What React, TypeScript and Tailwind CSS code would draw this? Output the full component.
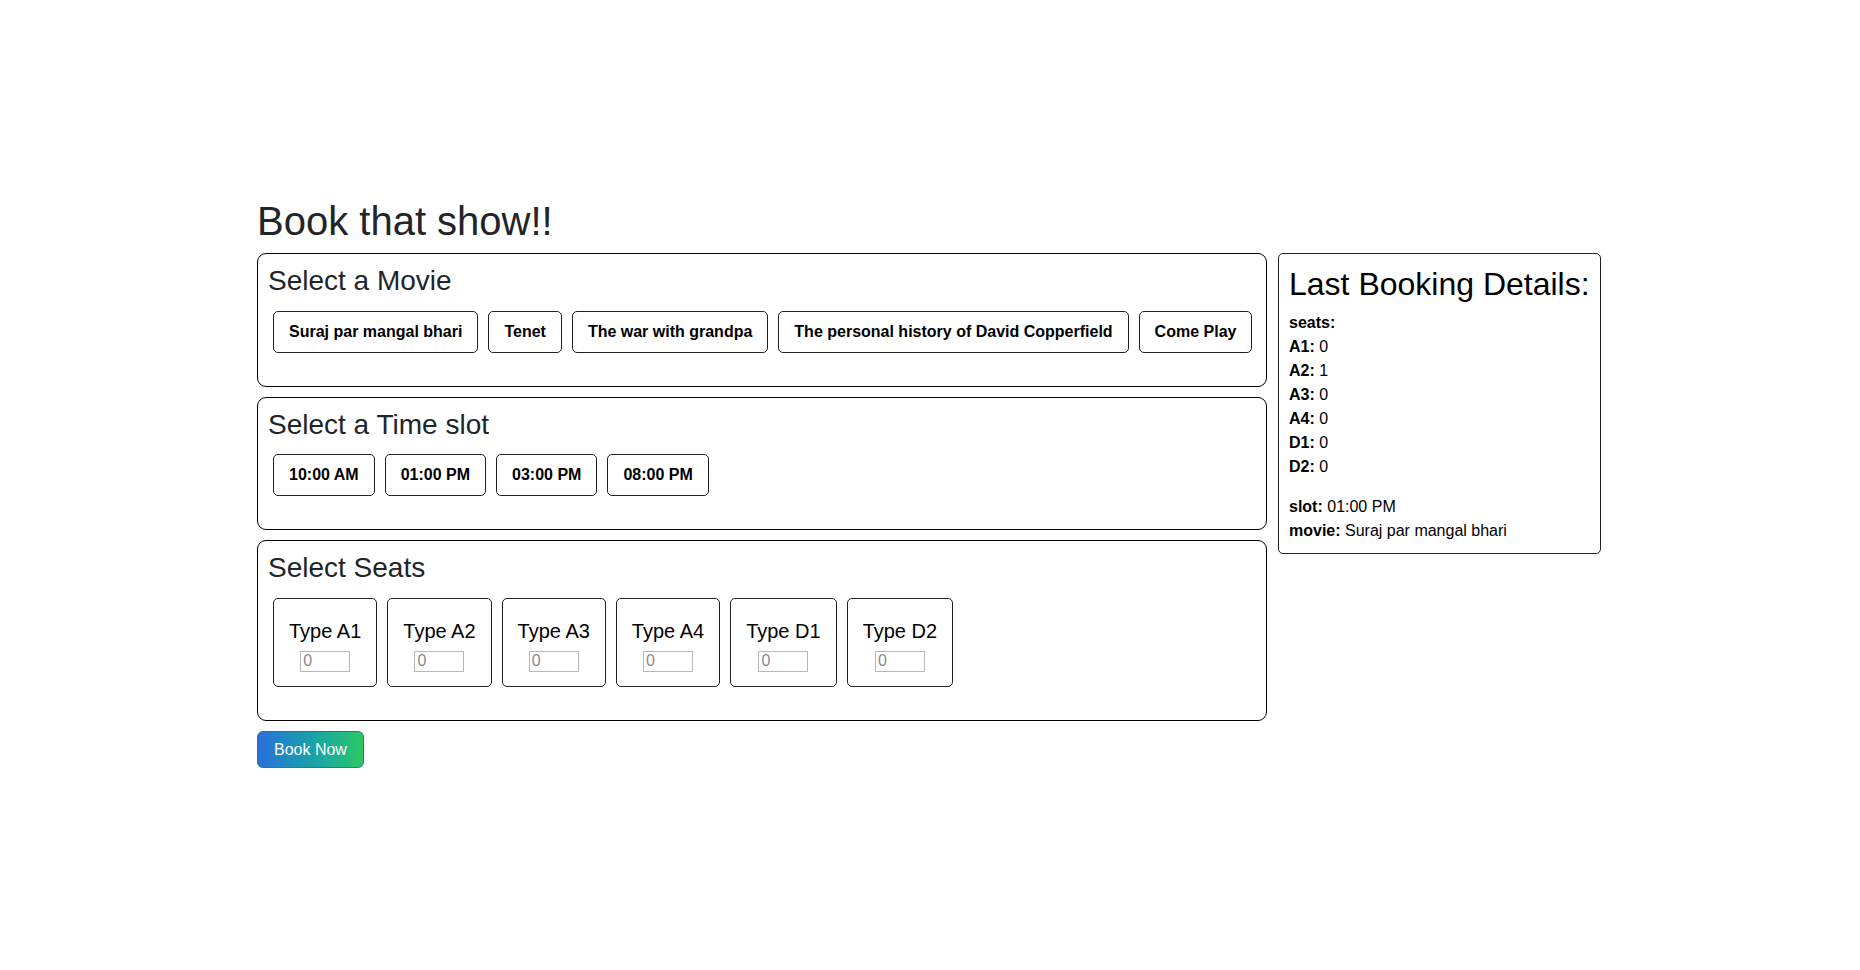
const MOVIES = [
  "Suraj par mangal bhari",
  "Tenet",
  "The war with grandpa",
  "The personal history of David Copperfield",
  "Come Play",
];

const SLOTS = ["10:00 AM", "01:00 PM", "03:00 PM", "08:00 PM"];

const SEATS = ["A1", "A2", "A3", "A4", "D1", "D2"];

const LAST_BOOKING: Record<string, number> = { A1: 0, A2: 1, A3: 0, A4: 0, D1: 0, D2: 0 };

function Section({ title, children }: { title: string; children: React.ReactNode }) {
  return (
    <div className="mb-[10px] rounded-[9px] border border-black px-[10px] pt-[10px] pb-[28px]">
      <h3 className="mb-2 text-[28px] leading-[33.6px] text-[#212529]">{title}</h3>
      <div className="flex flex-nowrap gap-[10px] p-[5px]">{children}</div>
    </div>
  );
}

function OptionButton({ label }: { label: string }) {
  return (
    <button className="shrink-0 whitespace-nowrap rounded-[5px] border border-[#222] bg-white px-[15px] py-[10px] text-[16px] font-bold leading-[20px] text-black">
      {label}
    </button>
  );
}

function SeatCard({ type }: { type: string }) {
  return (
    <div className="flex shrink-0 flex-col items-center rounded-[5px] border border-[#222] px-[15px] pt-[20px] pb-[14px]">
      <h5 className="mb-[8px] whitespace-nowrap text-[20px] leading-[24px] text-black">Type {type}</h5>
      <input
        type="number"
        placeholder="0"
        className="h-[21px] w-[50px] border border-[#b8b8b8] px-[2px] text-[16px] leading-[19px] text-black outline-none placeholder:text-[#8a8a8a] [appearance:textfield]"
      />
    </div>
  );
}

export default function App() {
  return (
    <div className="min-h-screen bg-white font-['Liberation_Sans',Arial,sans-serif] text-[#212529]">
      <div className="ml-[257px] w-[1345px] pt-[197px]">
        <h1 className="mb-2 text-[40px] leading-[48px]">Book that show!!</h1>
        <div className="flex items-start gap-[11px]">
          <div className="w-[1010px] shrink-0">
            <Section title="Select a Movie">
              {MOVIES.map((m) => (
                <OptionButton key={m} label={m} />
              ))}
            </Section>
            <Section title="Select a Time slot">
              {SLOTS.map((s) => (
                <OptionButton key={s} label={s} />
              ))}
            </Section>
            <Section title="Select Seats">
              {SEATS.map((s) => (
                <SeatCard key={s} type={s} />
              ))}
            </Section>
            <button className="rounded-[6px] border border-[#1f7f86] bg-gradient-to-r from-[#2c6edb] to-[#2ec762] px-[16px] py-[6px] text-[16px] leading-[23px] text-white">
              Book Now
            </button>
          </div>
          <div className="shrink-0 rounded-[5px] border border-[#222] px-[10px] pt-[11px] pb-[10px] text-black">
            <h2 className="mb-2 whitespace-nowrap text-[32px] leading-[38.4px]">Last Booking Details:</h2>
            <div className="mb-4 text-[16px] leading-[24px]">
              <div className="font-bold">seats:</div>
              {SEATS.map((s) => (
                <div key={s}>
                  <span className="font-bold">{s}:</span> {LAST_BOOKING[s]}
                </div>
              ))}
            </div>
            <div className="text-[16px] leading-[24px]">
              <div>
                <span className="font-bold">slot:</span> 01:00 PM
              </div>
              <div>
                <span className="font-bold">movie:</span> Suraj par mangal bhari
              </div>
            </div>
          </div>
        </div>
      </div>
    </div>
  );
}
